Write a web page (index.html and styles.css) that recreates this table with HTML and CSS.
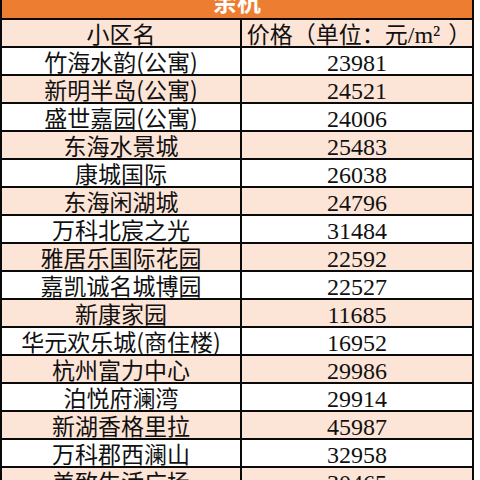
FILE: index.html
```html
<!DOCTYPE html>
<html lang="zh-CN">
<head>
<meta charset="utf-8">
<title>余杭</title>
<link rel="stylesheet" href="styles.css">
</head>
<body>
<div class="sheet">
  <div class="title"><span class="title-text">余杭</span></div>
  <div class="cell head name">小区名</div>
  <div class="cell head price">价格（单位：元<span class="unit">/m²</span>）</div>

  <div class="cell name">竹海水韵(公寓)</div><div class="cell num">23981</div>
  <div class="cell name alt">新明半岛(公寓)</div><div class="cell num alt">24521</div>
  <div class="cell name">盛世嘉园(公寓)</div><div class="cell num">24006</div>
  <div class="cell name alt">东海水景城</div><div class="cell num alt">25483</div>
  <div class="cell name">康城国际</div><div class="cell num">26038</div>
  <div class="cell name alt">东海闲湖城</div><div class="cell num alt">24796</div>
  <div class="cell name">万科北宸之光</div><div class="cell num">31484</div>
  <div class="cell name alt">雅居乐国际花园</div><div class="cell num alt">22592</div>
  <div class="cell name">嘉凯诚名城博园</div><div class="cell num">22527</div>
  <div class="cell name alt">新康家园</div><div class="cell num alt">11685</div>
  <div class="cell name">华元欢乐城(商住楼)</div><div class="cell num">16952</div>
  <div class="cell name alt">杭州富力中心</div><div class="cell num alt">29986</div>
  <div class="cell name">泊悦府澜湾</div><div class="cell num">29914</div>
  <div class="cell name alt">新湖香格里拉</div><div class="cell num alt">45987</div>
  <div class="cell name">万科郡西澜山</div><div class="cell num">32958</div>
  <div class="cell name alt">美致生活广场</div><div class="cell num alt">30465</div>
</div>
</body>
</html>
```

FILE: styles.css
```css
html, body {
  margin: 0;
  padding: 0;
  background: #ffffff;
  width: 480px;
  height: 480px;
  overflow: hidden;
}

.sheet {
  display: grid;
  grid-template-columns: 238px 230px;
  grid-auto-rows: 26px;
  grid-template-rows: 18px;
  gap: 2px;
  padding: 0 2px 2px 2px;
  background: #0a0a0a;
  width: 470px;
  font-family: "Noto Sans CJK SC", "Noto Sans", sans-serif;
  color: #111111;
}

.title {
  grid-column: 1 / span 2;
  background: #ed7d31;
  height: 18px;
  overflow: hidden;
  text-align: center;
}

.title-text {
  display: block;
  margin-top: -11px;
  font-size: 24px;
  line-height: 24px;
  font-weight: 700;
  color: #ffffff;
}

.cell {
  background: #ffffff;
  text-align: center;
  white-space: nowrap;
  overflow: hidden;
  height: 26px;
}

.cell.alt,
.cell.head {
  background: #fce4d6;
}

.name,
.price {
  font-size: 23px;
  line-height: 26px;
}

.price {
  padding-left: 4px;
}

.unit {
  font-family: "Liberation Serif", serif;
  font-size: 24px;
  padding-right: 8px;
}

.num {
  font-family: "Liberation Serif", serif;
  font-size: 24px;
  line-height: 22px;
  padding-top: 4px;
  height: 22px;
}
```
